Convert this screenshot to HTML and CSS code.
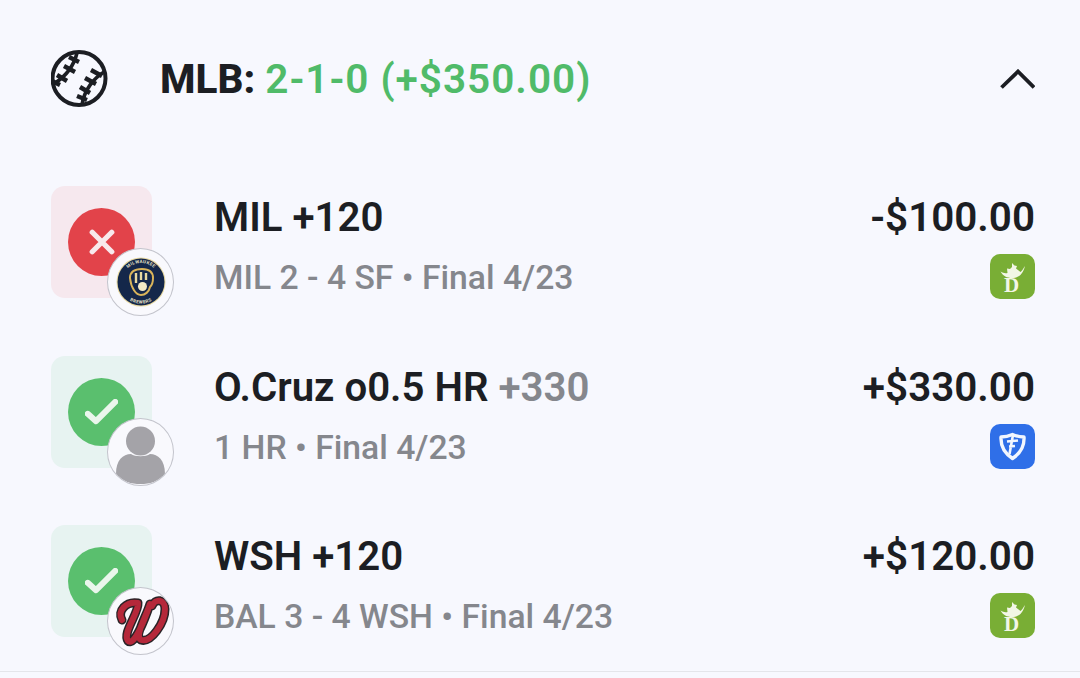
FILE: index.html
```html
<!DOCTYPE html>
<html>
<head>
  <meta charset="utf-8">
  <title>MLB Bets</title>
  <link rel="stylesheet" href="styles.css">
</head>
<body>
  <section class="league">
    <div class="league-head">
      <svg class="ball" viewBox="0 0 58 58" fill="none" stroke="#1c1e23">
        <circle cx="28" cy="28.500" r="26.500" stroke-width="4"/>
        <path d="M26 3 C23 15 15 26 4 33" stroke-width="3.600"/>
        <path d="M53 22 C43 28 33 40 31 55" stroke-width="3.600"/>
        <path d="M18 7l10 5M13 16l11 6M6 25l10 6M1 31l8 4" stroke-width="4.400"/>
        <path d="M40 20l11 6M34 28l11 6M29 37l10 6M26 46l10 4" stroke-width="4.400"/>
      </svg>
      <h2 class="league-title">MLB: <span class="record">2-1-0 (+$350.00)</span></h2>
      <svg class="chevron" viewBox="0 0 36 20" fill="none" stroke="#1c1e23" stroke-width="3.800">
        <path d="M2.500 18.500 L19 2.500 L35 18.500"/>
      </svg>
    </div>

    <div class="bet">
      <div class="tile tile-loss">
        <div class="status status-loss">
          <svg viewBox="0 0 32 32" fill="none" stroke="#f8e9ec" stroke-width="6.500" stroke-linecap="round">
            <path d="M4 4 L28 28 M28 4 L4 28"/>
          </svg>
        </div>
        <div class="badge">
          <svg viewBox="0 0 50 50">
            <circle cx="25" cy="25" r="24.500" fill="#e8d9a0"/>
            <circle cx="25" cy="25" r="23.500" fill="#14274a"/>
            <path id="brewTop" d="M6 25 A19 19 0 0 1 44 25" fill="none"/>
            <path id="brewBot" d="M3.500 25 A21.500 21.500 0 0 0 46.500 25" fill="none"/>
            <text class="brew-text"><textPath href="#brewTop" startOffset="50%" text-anchor="middle">MILWAUKEE</textPath></text>
            <text class="brew-text"><textPath href="#brewBot" startOffset="50%" text-anchor="middle">BREWERS</textPath></text>
            <path d="M14 21 C14 14 20 12 26 12 C33 12 37 15 37 21 C37 25 36 28 34 30 C33 35 29 38 25 38 C20 38 15 31 14 21Z" fill="#14274a" stroke="#d9b45a" stroke-width="2"/>
            <path d="M20 16v10M25 15v8M30 16v7" stroke="#e8d9a0" stroke-width="2.400" fill="none"/>
            <circle cx="26.500" cy="29.500" r="4.500" fill="#f3e9c4"/>
          </svg>
        </div>
      </div>
      <div class="bet-info">
        <div class="bet-name">MIL +120</div>
        <div class="bet-detail">MIL 2 - 4 SF • Final 4/23</div>
      </div>
      <div class="bet-result">
        <div class="amount">-$100.00</div>
        <div class="book book-dk">
          <svg viewBox="0 0 45 45">
            <path class="dk-crown" d="M10.500 17.500 C13 22 17 24 22 24 C29 24 33 20 35 12 C33 15 32 17 30.500 18 L26 14.500 L27 12 L24.500 11.500 L22 9 L22 13 L20 15 L17 14.500 L17.500 19 C15 19.500 13 19 10.500 17.500Z"/>
            <text class="dk-letter" x="21.500" y="37.500">D</text>
          </svg>
        </div>
      </div>
    </div>

    <div class="bet">
      <div class="tile tile-win">
        <div class="status status-win">
          <svg viewBox="0 0 36 28" fill="none" stroke="#eaf6ec" stroke-width="6.500" stroke-linecap="round" stroke-linejoin="round">
            <path d="M3 16 L12 24 L33 3"/>
          </svg>
        </div>
        <div class="badge">
          <svg viewBox="0 0 65 65">
            <circle cx="32.500" cy="22" r="14.500" fill="#a4a3a8"/>
            <path d="M8 55 C8 41 15 35 23 35 C27 38 38 38 42 35 C50 35 57 41 57 55 C50 63 42 65 32.500 65 C23 65 15 63 8 55Z" fill="#a4a3a8"/>
          </svg>
        </div>
      </div>
      <div class="bet-info">
        <div class="bet-name">O.Cruz o0.5 HR <span class="odds">+330</span></div>
        <div class="bet-detail">1 HR • Final 4/23</div>
      </div>
      <div class="bet-result">
        <div class="amount">+$330.00</div>
        <div class="book book-fd">
          <svg viewBox="0 0 45 45">
            <path d="M22.500 10.500 C27 12.500 30 13 34 13 C34.500 22 31 29 22.500 34.500 C14 29 10.500 22 11 13 C15 13 18 12.500 22.500 10.500Z" fill="#2f6fe8" stroke="#f2f6fe" stroke-width="3.400" stroke-linejoin="round"/>
            <path d="M17 17.500 L28 16.500 M23 11 L19.500 30 M19 22.500 L25 22" fill="none" stroke="#f2f6fe" stroke-width="2.600"/>
          </svg>
        </div>
      </div>
    </div>

    <div class="bet">
      <div class="tile tile-win">
        <div class="status status-win">
          <svg viewBox="0 0 36 28" fill="none" stroke="#eaf6ec" stroke-width="6.500" stroke-linecap="round" stroke-linejoin="round">
            <path d="M3 16 L12 24 L33 3"/>
          </svg>
        </div>
        <div class="badge">
          <svg viewBox="0 0 65 65" fill="none" stroke-linecap="round" stroke-linejoin="round">
            <path class="w-edge" d="M14 31 C9 22 18 12 30 14 C31 24 14 44 20 52 C26 58 37 30 42 15 C38 28 26 47 33 51 C43 54 57 34 57 20 C57 10 47 9 44 17"/>
            <path class="w-fill" d="M14 31 C9 22 18 12 30 14 C31 24 14 44 20 52 C26 58 37 30 42 15 C38 28 26 47 33 51 C43 54 57 34 57 20 C57 10 47 9 44 17"/>
          </svg>
        </div>
      </div>
      <div class="bet-info">
        <div class="bet-name">WSH +120</div>
        <div class="bet-detail">BAL 3 - 4 WSH • Final 4/23</div>
      </div>
      <div class="bet-result">
        <div class="amount">+$120.00</div>
        <div class="book book-dk">
          <svg viewBox="0 0 45 45">
            <path class="dk-crown" d="M10.500 17.500 C13 22 17 24 22 24 C29 24 33 20 35 12 C33 15 32 17 30.500 18 L26 14.500 L27 12 L24.500 11.500 L22 9 L22 13 L20 15 L17 14.500 L17.500 19 C15 19.500 13 19 10.500 17.500Z"/>
            <text class="dk-letter" x="21.500" y="37.500">D</text>
          </svg>
        </div>
      </div>
    </div>
  </section>
</body>
</html>
```

FILE: styles.css
```css
* {
  margin: 0;
  padding: 0;
  box-sizing: border-box;
}

body {
  font-family: 'Roboto', 'Liberation Sans', sans-serif;
  background-color: #f7f8fe;
  color: #1c1e23;
  height: 678px;
  overflow: hidden;
}

.league {
  padding: 50px 45px 0 51px;
  height: 672px;
  border-bottom: 1px solid #e4e5ea;
}

.league-head {
  display: flex;
  align-items: center;
  height: 58px;
  margin-bottom: 78px;
}

.ball {
  width: 58px;
  height: 58px;
  flex-shrink: 0;
}

.league-title {
  flex: 1;
  margin-left: 51px;
  font-size: 40.5px;
  font-weight: 800;
}

.record {
  color: #50bb69;
  font-weight: 600;
  letter-spacing: 1px;
}

.chevron {
  width: 36px;
  height: 20px;
}

.bet {
  display: flex;
  height: 112px;
  margin-bottom: 57.5px;
}

.tile {
  position: relative;
  width: 101px;
  height: 112px;
  border-radius: 14px;
  display: flex;
  align-items: center;
  justify-content: center;
  flex-shrink: 0;
}

.tile-loss {
  background-color: #f6e8ee;
}

.tile-win {
  background-color: #e7f3f1;
}

.status {
  width: 67px;
  height: 68px;
  border-radius: 50%;
  display: flex;
  align-items: center;
  justify-content: center;
}

.status-loss {
  background-color: #e2434a;
}

.status-loss svg {
  width: 28px;
  height: 26px;
}

.status-win {
  background-color: #5abf6e;
}

.status-win svg {
  width: 33px;
  height: 26px;
}

.badge {
  position: absolute;
  left: 56px;
  top: 62px;
  width: 67px;
  height: 68px;
  border-radius: 50%;
  border: 1px solid #c3c4cc;
  background-color: #f9f9fd;
  overflow: hidden;
  display: flex;
  align-items: center;
  justify-content: center;
}

.tile-loss .badge svg {
  width: 50px;
  height: 50px;
}

.tile-win .badge svg {
  width: 65px;
  height: 65px;
}

.brew-text {
  font-size: 4.5px;
  font-weight: 700;
  fill: #e8e2c8;
  letter-spacing: 0.4px;
}

.w-edge {
  stroke: #2a2327;
  stroke-width: 9;
}

.w-fill {
  stroke: #b5283a;
  stroke-width: 6;
}

.bet-info {
  flex: 1;
  margin-left: 62px;
}

.bet-name {
  font-size: 40.2px;
  font-weight: 600;
  line-height: 44px;
  margin-top: 10px;
}

.odds {
  color: #85878d;
}

.bet-detail {
  font-size: 33.7px;
  font-weight: 500;
  color: #85878d;
  line-height: 40px;
  margin-top: 18px;
}

.bet-result {
  display: flex;
  flex-direction: column;
  align-items: flex-end;
}

.amount {
  font-size: 40.4px;
  font-weight: 600;
  line-height: 44px;
  margin-top: 10px;
}

.book {
  width: 45px;
  height: 45px;
  border-radius: 10px;
  margin-top: 14px;
}

.book svg {
  display: block;
  width: 45px;
  height: 45px;
}

.book-dk {
  background-color: #79ae35;
}

.book-fd {
  background-color: #2f6fe8;
}

.dk-crown {
  fill: #f2f6e6;
}

.dk-letter {
  font-family: 'Liberation Serif', serif;
  font-size: 21px;
  font-weight: 700;
  fill: #f2f6e6;
  text-anchor: middle;
}
```
